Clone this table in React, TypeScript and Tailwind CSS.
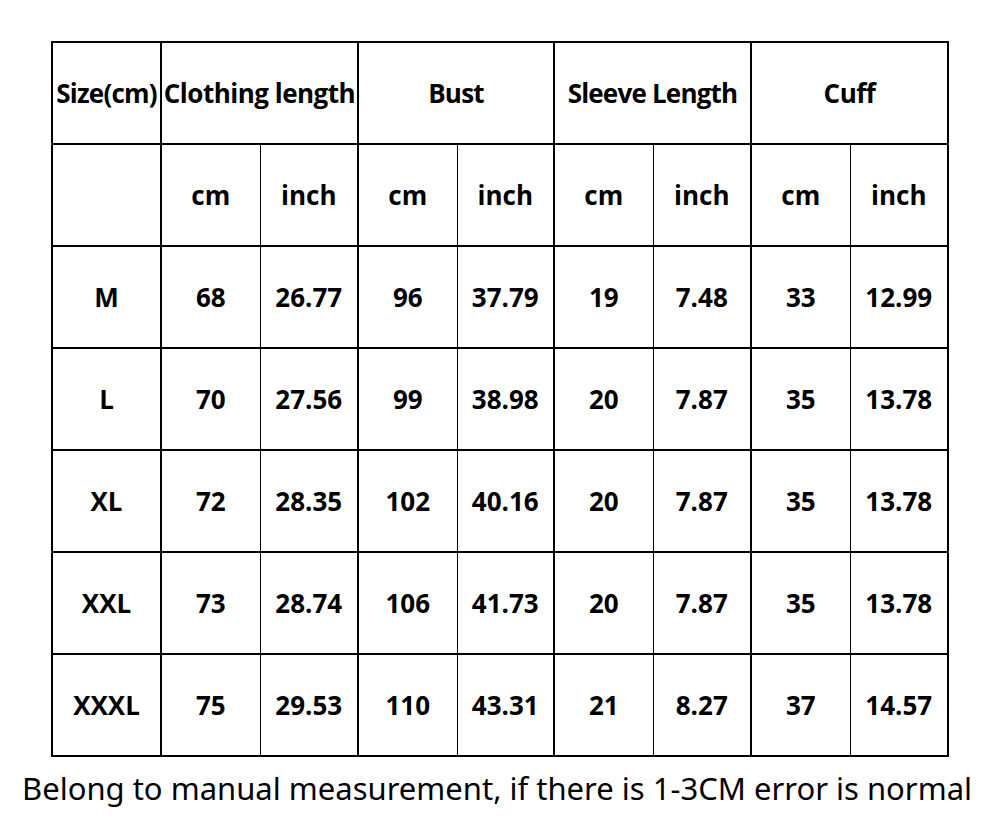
const ROWS = [
  ["M", "68", "26.77", "96", "37.79", "19", "7.48", "33", "12.99"],
  ["L", "70", "27.56", "99", "38.98", "20", "7.87", "35", "13.78"],
  ["XL", "72", "28.35", "102", "40.16", "20", "7.87", "35", "13.78"],
  ["XXL", "73", "28.74", "106", "41.73", "20", "7.87", "35", "13.78"],
  ["XXXL", "75", "29.53", "110", "43.31", "21", "8.27", "37", "14.57"],
];

const WIDTHS = [109, 99, 98, 99, 97, 99, 98, 99, 98];

// odd columns are "cm", even columns are "inch"
function cellBorder(i: number) {
  if (i === 0) return "border-2";
  return i % 2 === 1 ? "border-y-2 border-l-2 border-r" : "border-y-2 border-l border-r-2";
}

export default function App() {
  return (
    <div
      className="h-[824px] w-[1000px] bg-white text-black"
      style={{ fontFamily: '"Open Sans", "Noto Sans", sans-serif' }}
    >
      <div className="pl-[51px] pt-[41px]">
        <table className="table-fixed border-collapse text-center text-[26px] font-bold">
          <colgroup>
            {WIDTHS.map((w, i) => (
              <col key={i} style={{ width: w }} />
            ))}
          </colgroup>
          <tbody>
            <tr className="h-[102px]">
              <td className="border-2 border-black whitespace-nowrap tracking-[-0.8px]">Size(cm)</td>
              <td colSpan={2} className="border-2 border-black whitespace-nowrap tracking-[-0.5px]">
                Clothing length
              </td>
              <td colSpan={2} className="border-2 border-black tracking-[-0.8px]">Bust</td>
              <td colSpan={2} className="border-2 border-black whitespace-nowrap tracking-[-0.8px]">
                Sleeve Length
              </td>
              <td colSpan={2} className="border-2 border-black tracking-[-0.5px]">Cuff</td>
            </tr>
            <tr className="h-[102px]">
              {WIDTHS.map((_, i) => (
                <td key={i} className={`${cellBorder(i)} border-black`}>
                  {i === 0 ? "" : i % 2 === 1 ? "cm" : "inch"}
                </td>
              ))}
            </tr>
            {ROWS.map((row) => (
              <tr key={row[0]} className="h-[102px]">
                {row.map((v, i) => (
                  <td key={i} className={`${cellBorder(i)} border-black`}>
                    {v}
                  </td>
                ))}
              </tr>
            ))}
          </tbody>
        </table>
      </div>
      <p
        className="mt-[11px] pl-[22px] text-[31px] leading-[40px]"
        style={{ fontFamily: '"Noto Sans", "Open Sans", sans-serif' }}
      >
        Belong to manual measurement, if there is 1-3CM error is normal
      </p>
    </div>
  );
}
